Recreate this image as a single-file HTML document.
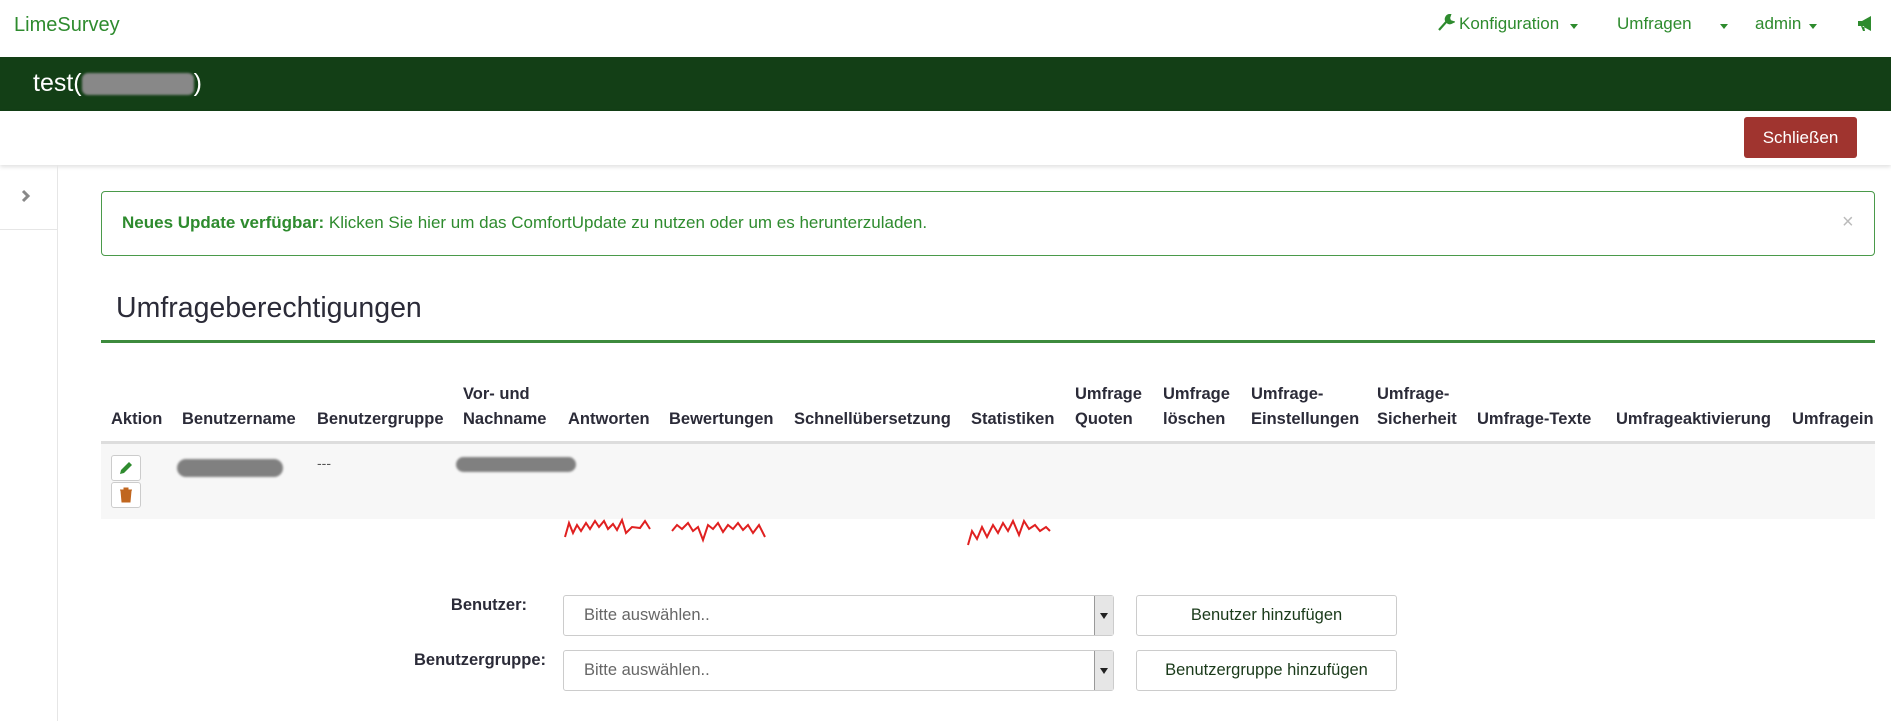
<!DOCTYPE html>
<html><head><meta charset="utf-8"><style>
*{margin:0;padding:0;box-sizing:border-box}
body{width:1891px;height:721px;overflow:hidden;background:#fff;font-family:"Liberation Sans",Arial,sans-serif;position:relative;color:#333}
.a{position:absolute;white-space:nowrap}
.nav{color:#2e8b2e;font-size:17px}
.th{position:absolute;font-weight:bold;font-size:16.5px;color:#2b2b38;line-height:25px;white-space:nowrap}
.blob{position:absolute;background:#808080;border-radius:9px;filter:blur(1px)}
.sel{position:absolute;left:563px;width:551px;height:41px;border:1px solid #ccc;border-radius:3px;background:#fff;font-size:16.5px;color:#666;padding:10px 20px}
.sel .ar{position:absolute;right:0;top:0;width:19px;height:39px;background:#e6e6e6;border-left:1px solid #999}
.sel .ar:after{content:"";position:absolute;left:5px;top:17px;border:4px solid transparent;border-top:6px solid #222}
.btn{position:absolute;left:1136px;width:261px;height:41px;border:1px solid #ccc;border-radius:3px;background:#fff;font-size:16.5px;color:#1a3a1a;text-align:center;line-height:39px}
.lab{position:absolute;font-weight:bold;font-size:16.5px;color:#2b2b38;text-align:right}
</style></head><body>
<div class="a nav" style="left:14px;top:14px;font-size:20px">LimeSurvey</div>
<svg class="a" style="left:1437px;top:14px" width="18" height="18" viewBox="0 0 18 18"><path d="M2 16 L10 7 M9 4 a4 4 0 0 0 5 5 l2-1 -3-1 -1-3 1-3 a4 4 0 0 0 -4 3z" stroke="#2e8b2e" stroke-width="2.2" fill="#2e8b2e"/></svg>
<div class="a nav" style="left:1459px;top:14px">Konfiguration</div>
<div class="a" style="left:1570px;top:24px;border:4px solid transparent;border-top:5px solid #2e8b2e"></div>
<div class="a nav" style="left:1617px;top:14px">Umfragen</div>
<div class="a" style="left:1720px;top:24px;border:4px solid transparent;border-top:5px solid #2e8b2e"></div>
<div class="a nav" style="left:1755px;top:14px">admin</div>
<div class="a" style="left:1809px;top:24px;border:4px solid transparent;border-top:5px solid #2e8b2e"></div>
<svg class="a" style="left:1857px;top:15px" width="18" height="17" viewBox="0 0 18 17"><path d="M1 6h4l9-5v15l-9-5H1z M4 11l2 5h2l-1-5" fill="#2e8b2e"/></svg>
<div class="a" style="left:0;top:57px;width:1891px;height:54px;background:#133f16"></div>
<div class="a" style="left:33px;top:69px;color:#fff;font-size:25px">test(<span style="display:inline-block;width:112px;height:22px;background:#888;border-radius:6px;vertical-align:middle;filter:blur(1px)"></span>)</div>
<div class="a" style="left:0;top:111px;width:1891px;height:54px;background:#fff;box-shadow:0 2px 4px rgba(0,0,0,.12)"></div>
<div class="a" style="left:1744px;top:117px;width:113px;height:41px;background:#a0342f;border-radius:3px;color:#fff;font-size:17px;text-align:center;line-height:41px">Schließen</div>
<div class="a" style="left:57px;top:165px;width:1px;height:556px;background:#e6e6e6"></div>
<div class="a" style="left:0;top:229px;width:57px;height:1px;background:#e6e6e6"></div>
<svg class="a" style="left:21px;top:189px" width="10" height="14" viewBox="0 0 10 14"><path d="M2 2l5 5-5 5" stroke="#888" stroke-width="3" fill="none"/></svg>
<div class="a" style="left:101px;top:191px;width:1774px;height:65px;border:1px solid #4a9a4a;border-radius:4px"></div>
<div class="a" style="left:122px;top:213px;font-size:17px;color:#2e8b2e"><b>Neues Update verfügbar:</b> Klicken Sie hier um das ComfortUpdate zu nutzen oder um es herunterzuladen.</div>
<div class="a" style="left:1842px;top:211px;font-size:20px;color:#bbb">×</div>
<div class="a" style="left:116px;top:292px;font-size:28.5px;font-weight:500;color:#2b2b38">Umfrageberechtigungen</div>
<div class="a" style="left:101px;top:340px;width:1774px;height:3px;background:#3d8b3d"></div>
<div class="th" style="left:111px;top:407px">Aktion</div>
<div class="th" style="left:182px;top:407px">Benutzername</div>
<div class="th" style="left:317px;top:407px">Benutzergruppe</div>
<div class="th" style="left:463px;top:382px">Vor- und<br>Nachname</div>
<div class="th" style="left:568px;top:407px">Antworten</div>
<div class="th" style="left:669px;top:407px">Bewertungen</div>
<div class="th" style="left:794px;top:407px">Schnellübersetzung</div>
<div class="th" style="left:971px;top:407px">Statistiken</div>
<div class="th" style="left:1075px;top:382px">Umfrage<br>Quoten</div>
<div class="th" style="left:1163px;top:382px">Umfrage<br>löschen</div>
<div class="th" style="left:1251px;top:382px">Umfrage-<br>Einstellungen</div>
<div class="th" style="left:1377px;top:382px">Umfrage-<br>Sicherheit</div>
<div class="th" style="left:1477px;top:407px">Umfrage-Texte</div>
<div class="th" style="left:1616px;top:407px">Umfrageaktivierung</div>
<div class="th" style="left:1792px;top:407px">Umfragein</div>
<div class="a" style="left:101px;top:441px;width:1774px;height:3px;background:#ddd"></div>
<div class="a" style="left:101px;top:444px;width:1774px;height:75px;background:#f7f7f7"></div>
<div class="a" style="left:111px;top:455px;width:30px;height:26px;border:1px solid #ccc;border-radius:3px;background:#fff"></div>
<svg class="a" style="left:118px;top:460px" width="16" height="16" viewBox="0 0 16 16"><path d="M2 14l1-4 8-8 3 3-8 8z" fill="#2e8b2e"/></svg>
<div class="a" style="left:111px;top:482px;width:30px;height:26px;border:1px solid #ccc;border-radius:3px;background:#fff"></div>
<svg class="a" style="left:119px;top:487px" width="14" height="16" viewBox="0 0 14 16"><path d="M1 3h12M5 3V1h4v2M2 4h10l-1 11H3z" fill="#c0661f" stroke="#c0661f"/></svg>
<div class="blob" style="left:177px;top:459px;width:106px;height:18px"></div>
<div class="a" style="left:317px;top:455px;font-size:14px;color:#555">---</div>
<div class="blob" style="left:456px;top:457px;width:120px;height:15px"></div>
<svg class="a" style="left:560px;top:515px" width="520" height="35"><g stroke="#e02020" stroke-width="2" fill="none"><polyline points="5,22 9,8 13,18 17,10 21,16 26,8 30,14 35,6 39,12 44,6 48,14 53,9 57,15 62,5 66,18 72,12 80,13 85,6 90,14"/><polyline points="112,16 117,10 122,14 128,8 133,16 138,12 143,25 148,10 153,14 158,8 163,17 168,10 173,14 178,8 183,15 188,10 193,18 199,10 205,22"/><polyline points="408,30 412,16 417,24 422,12 427,22 433,10 438,18 443,8 448,16 453,6 459,20 464,6 469,14 475,10 480,16 486,12 490,16"/></g></svg>
<div class="lab" style="left:400px;top:596px;width:127px">Benutzer:</div>
<div class="sel" style="top:595px">Bitte auswählen..<div class="ar"></div></div>
<div class="btn" style="top:595px">Benutzer hinzufügen</div>
<div class="lab" style="left:400px;top:651px;width:146px">Benutzergruppe:</div>
<div class="sel" style="top:650px">Bitte auswählen..<div class="ar"></div></div>
<div class="btn" style="top:650px">Benutzergruppe hinzufügen</div>
</body></html>
